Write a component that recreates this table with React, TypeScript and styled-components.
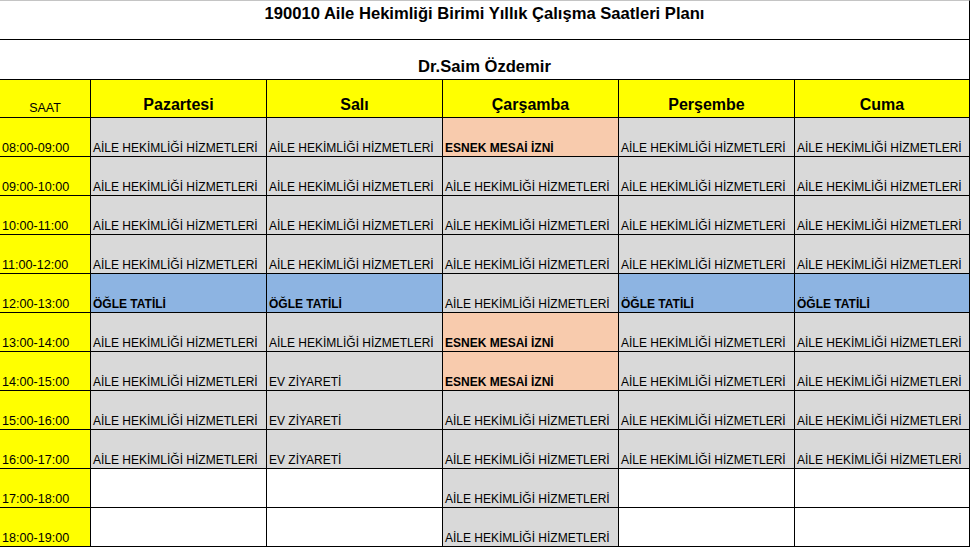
import { Fragment } from 'react';
import styled, { createGlobalStyle } from 'styled-components';

const GlobalStyle = createGlobalStyle`
  body {
    margin: 0;
    background: #ffffff;
  }
`

const YELLOW = '#ffff00'
const GREY = '#d9d9d9'
const PEACH = '#f8cbad'
const BLUE = '#8db4e2'
const WHITE = '#ffffff'

const Sheet = styled.div`
  display: grid;
  grid-template-columns: 91px repeat(4, 176px) 175px;
  width: 970px;
  font-family: "Liberation Sans", Arial, sans-serif;
  color: #000;
`

const Banner = styled.div<{ $top?: boolean }>`
  grid-column: 1 / -1;
  box-sizing: border-box;
  height: ${p => (p.$top ? 40 : 39)}px;
  display: flex;
  justify-content: center;
  align-items: ${p => (p.$top ? 'flex-start' : 'flex-end')};
  padding: ${p => (p.$top ? '4px 0 0' : '0 0 3px')};
  border-top: ${p => (p.$top ? '1px solid #c4c4c4' : 'none')};
  border-right: 1px solid #000;
  border-bottom: ${p => (p.$top ? '1px solid #000' : 'none')};
  font-size: 16.6px;
  font-weight: bold;
  line-height: 18px;
  white-space: nowrap;
`

const HeadCell = styled.div<{ $small?: boolean }>`
  box-sizing: border-box;
  height: 39px;
  display: flex;
  justify-content: center;
  align-items: flex-end;
  padding-bottom: ${p => (p.$small ? '2.5px' : '3px')};
  background: ${YELLOW};
  border-top: 1px solid #000;
  border-right: 1px solid #000;
  border-bottom: 1px solid #000;
  font-size: ${p => (p.$small ? '12.5px' : '16px')};
  font-weight: ${p => (p.$small ? 'normal' : 'bold')};
  line-height: ${p => (p.$small ? '14px' : '18px')};
  white-space: nowrap;
`

const Cell = styled.div<{ $bg: string; $bold?: boolean; $time?: boolean }>`
  box-sizing: border-box;
  height: 39px;
  display: flex;
  align-items: flex-end;
  padding: 0 0 1.5px 2px;
  background: ${p => p.$bg};
  border-right: 1px solid #000;
  border-bottom: 1px solid #000;
  font-size: ${p => (p.$time ? '12.6px' : '12px')};
  font-weight: ${p => (p.$bold ? 'bold' : 'normal')};
  line-height: 14px;
  white-space: nowrap;
  overflow: hidden;
`

const days = ['Pazartesi', 'Salı', 'Çarşamba', 'Perşembe', 'Cuma']

// A = hizmet, E = esnek mesai, O = öğle tatili, V = ev ziyareti, '' = boş
const plan: [string, string[]][] = [
  ['08:00-09:00', ['A', 'A', 'E', 'A', 'A']],
  ['09:00-10:00', ['A', 'A', 'A', 'A', 'A']],
  ['10:00-11:00', ['A', 'A', 'A', 'A', 'A']],
  ['11:00-12:00', ['A', 'A', 'A', 'A', 'A']],
  ['12:00-13:00', ['O', 'O', 'A', 'O', 'O']],
  ['13:00-14:00', ['A', 'A', 'E', 'A', 'A']],
  ['14:00-15:00', ['A', 'V', 'E', 'A', 'A']],
  ['15:00-16:00', ['A', 'V', 'A', 'A', 'A']],
  ['16:00-17:00', ['A', 'V', 'A', 'A', 'A']],
  ['17:00-18:00', ['', '', 'A', '', '']],
  ['18:00-19:00', ['', '', 'A', '', '']],
]

const kinds: Record<string, { text: string; bg: string; bold?: boolean }> = {
  A: { text: 'AİLE HEKİMLİĞİ HİZMETLERİ', bg: GREY },
  E: { text: 'ESNEK MESAİ İZNİ', bg: PEACH, bold: true },
  O: { text: 'ÖĞLE TATİLİ', bg: BLUE, bold: true },
  V: { text: 'EV ZİYARETİ', bg: GREY },
  '': { text: '', bg: WHITE },
}

export default function App() {
  return (
    <>
      <GlobalStyle />
      <Sheet>
        <Banner $top>190010 Aile Hekimliği Birimi Yıllık Çalışma Saatleri Planı</Banner>
        <Banner>Dr.Saim Özdemir</Banner>

        <HeadCell $small>SAAT</HeadCell>
        {days.map(d => <HeadCell key={d}>{d}</HeadCell>)}

        {plan.map(([time, row]) => (
          <Fragment key={time}>
            <Cell $bg={YELLOW} $time>{time}</Cell>
            {row.map((k, i) => (
              <Cell key={i} $bg={kinds[k].bg} $bold={kinds[k].bold}>
                {kinds[k].text}
              </Cell>
            ))}
          </Fragment>
        ))}
      </Sheet>
    </>
  )
}
